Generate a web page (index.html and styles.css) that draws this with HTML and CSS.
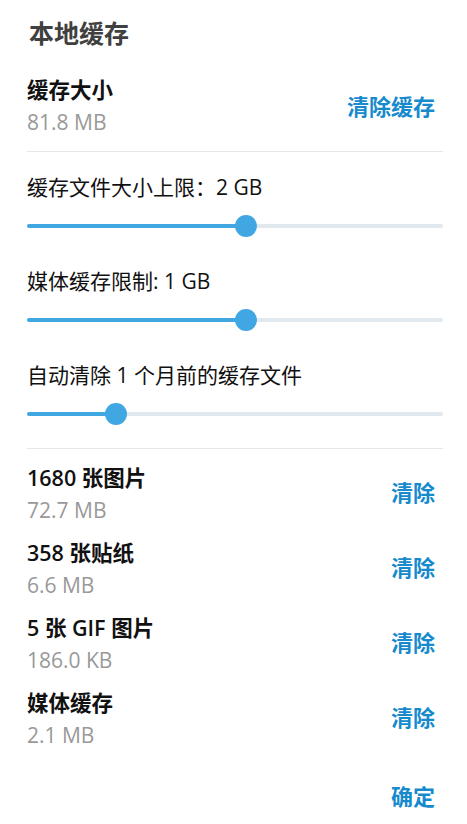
FILE: index.html
```
<!DOCTYPE html>
<html lang="zh-CN">
<head>
<meta charset="utf-8">
<title>本地缓存</title>
<link rel="stylesheet" href="styles.css">
</head>
<body>
<div class="box">
  <h1 class="title">本地缓存</h1>

  <div class="row first">
    <div class="info">
      <div class="label">缓存大小</div>
      <div class="sub">81.8 MB</div>
    </div>
    <button class="link">清除缓存</button>
  </div>

  <div class="divider"></div>

  <div class="settings">
    <div class="setting">
      <div class="text">缓存文件大小上限：2 GB</div>
      <div class="slider"><div class="fill" style="width:219px"></div><div class="thumb" style="left:208px"></div></div>
    </div>
    <div class="setting">
      <div class="text">媒体缓存限制: 1 GB</div>
      <div class="slider"><div class="fill" style="width:219px"></div><div class="thumb" style="left:208px"></div></div>
    </div>
    <div class="setting">
      <div class="text">自动清除 1 个月前的缓存文件</div>
      <div class="slider"><div class="fill" style="width:89px"></div><div class="thumb" style="left:78px"></div></div>
    </div>
  </div>

  <div class="divider second"></div>

  <div class="items">
    <div class="row item">
      <div class="info">
        <div class="label">1680 张图片</div>
        <div class="sub">72.7 MB</div>
      </div>
      <button class="link">清除</button>
    </div>
    <div class="row item">
      <div class="info">
        <div class="label">358 张贴纸</div>
        <div class="sub">6.6 MB</div>
      </div>
      <button class="link">清除</button>
    </div>
    <div class="row item">
      <div class="info">
        <div class="label">5 张 GIF 图片</div>
        <div class="sub">186.0 KB</div>
      </div>
      <button class="link">清除</button>
    </div>
    <div class="row item">
      <div class="info">
        <div class="label">媒体缓存</div>
        <div class="sub">2.1 MB</div>
      </div>
      <button class="link">清除</button>
    </div>
  </div>

  <div class="footer">
    <button class="link">确定</button>
  </div>
</div>
</body>
</html>
```
FILE: styles.css
```
html, body {
  margin: 0;
  padding: 0;
  background: #ffffff;
}
body {
  font-family: "Open Sans", "Noto Sans CJK SC", sans-serif;
  color: #000000;
  font-size: 21px;
}
.box {
  width: 416px;
  padding: 18px 0 0 27px;
}
.title {
  margin: 0 0 27px 2px;
  font-size: 25px;
  line-height: 30px;
  font-weight: 600;
  color: #404040;
}
.row {
  display: flex;
  justify-content: space-between;
  align-items: center;
}
.info {
  display: flex;
  flex-direction: column;
}
.label {
  font-weight: 600;
  font-size: 21.5px;
  line-height: 30px;
  color: #111111;
}
.sub {
  margin-top: 2px;
  line-height: 30px;
  color: #999999;
}
.link {
  border: 0;
  background: none;
  padding: 0 8px 0 0;
  margin: 0;
  font-family: "Open Sans", "Noto Sans CJK SC", sans-serif;
  font-size: 22px;
  line-height: 30px;
  font-weight: 700;
  color: #168acd;
}
.first {
  padding-bottom: 14px;
}
.divider {
  height: 1px;
  background: #e7e7e7;
}
.settings {
  display: flex;
  flex-direction: column;
  gap: 29px;
  padding-top: 20px;
}
.text {
  line-height: 30px;
  margin-bottom: 13px;
  color: #111111;
}
.slider {
  position: relative;
  height: 22px;
}
.slider::before {
  content: "";
  position: absolute;
  left: 0;
  right: 0;
  top: 9px;
  height: 4px;
  border-radius: 2px;
  background: #e1e9ef;
}
.fill {
  position: absolute;
  left: 0;
  top: 9px;
  height: 4px;
  border-radius: 2px;
  background: #40a7e3;
}
.thumb {
  position: absolute;
  top: 0;
  width: 22px;
  height: 22px;
  border-radius: 50%;
  background: #40a7e3;
}
.second {
  margin-top: 23px;
}
.items {
  padding-top: 14px;
  display: flex;
  flex-direction: column;
  gap: 13px;
}
.item .link {
  margin-bottom: 4px;
}
.footer {
  display: flex;
  justify-content: flex-end;
  margin-top: 31px;
}
```
